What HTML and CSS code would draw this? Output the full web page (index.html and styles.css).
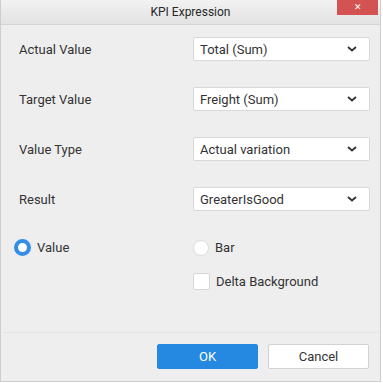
FILE: index.html
```html
<!DOCTYPE html>
<html lang="en">

<head>
    <meta charset="UTF-8">
    <title>KPI Expression</title>
    <link rel="stylesheet" href="styles.css">
</head>

<body>
    <div class="dialog">
        <div class="titlebar">
            <span>KPI Expression</span>
            <div class="close">&#x2715;</div>
        </div>

        <div class="content">
            <div class="field">
                <label>Actual Value</label>
                <div class="dropdown"><span>Total (Sum)</span>
                    <svg width="10" height="6" viewBox="0 0 10 6"><path d="M1 1l4 3.5L9 1" fill="none" stroke="#333" stroke-width="1.8"/></svg>
                </div>
            </div>
            <div class="field">
                <label>Target Value</label>
                <div class="dropdown"><span>Freight (Sum)</span>
                    <svg width="10" height="6" viewBox="0 0 10 6"><path d="M1 1l4 3.5L9 1" fill="none" stroke="#333" stroke-width="1.8"/></svg>
                </div>
            </div>
            <div class="field">
                <label>Value Type</label>
                <div class="dropdown"><span>Actual variation</span>
                    <svg width="10" height="6" viewBox="0 0 10 6"><path d="M1 1l4 3.5L9 1" fill="none" stroke="#333" stroke-width="1.8"/></svg>
                </div>
            </div>
            <div class="field">
                <label>Result</label>
                <div class="dropdown"><span>GreaterIsGood</span>
                    <svg width="10" height="6" viewBox="0 0 10 6"><path d="M1 1l4 3.5L9 1" fill="none" stroke="#333" stroke-width="1.8"/></svg>
                </div>
            </div>

            <div class="options">
                <div class="choice"><span class="radio checked"></span>Value</div>
                <div class="choice"><span class="radio"></span>Bar</div>
                <div class="choice second"><span class="check"></span>Delta Background</div>
            </div>
        </div>

        <div class="footer">
            <button class="btn primary">OK</button>
            <button class="btn">Cancel</button>
        </div>
    </div>
</body>

</html>
```

FILE: styles.css
```css
body {
    margin: 0px;
    background-color: white;
    font-family: Roboto, "Liberation Sans", sans-serif;
    color: rgb(51, 51, 51);
}

.dialog {
    width: 381px;
    height: 382px;
    box-sizing: border-box;
    border: 1px solid rgb(205, 205, 205);
    border-top: none;
    background-color: rgb(238, 238, 238);
    display: flex;
    flex-direction: column;
}

.titlebar {
    position: relative;
    height: 25px;
    box-sizing: border-box;
    border-bottom: 1px solid rgb(212, 212, 212);
    background: linear-gradient(rgb(242, 242, 242), rgb(226, 226, 226));
    display: flex;
    align-items: center;
    justify-content: center;
    font-size: 12px;
    color: rgb(40, 40, 40);
}

.close {
    position: absolute;
    top: 0px;
    right: 2px;
    width: 41px;
    height: 15px;
    background-color: rgb(211, 82, 82);
    color: white;
    font-size: 9px;
    line-height: 15px;
    text-align: center;
}

.content {
    flex: 1;
    padding: 12px 11px 0px 18px;
    display: flex;
    flex-direction: column;
    gap: 26px;
}

.field {
    display: grid;
    grid-template-columns: 174px 177px;
    align-items: center;
    font-size: 13px;
}

.dropdown {
    height: 24px;
    box-sizing: border-box;
    border: 1px solid rgb(216, 216, 216);
    border-radius: 2px;
    background-color: white;
    padding: 0px 12px 0px 6px;
    display: flex;
    align-items: center;
    justify-content: space-between;
}

.options {
    display: grid;
    grid-template-columns: 179px 177px;
    row-gap: 17px;
    margin: 2px 0px 0px -5px;
    font-size: 13px;
}

.choice {
    display: flex;
    align-items: center;
    gap: 6px;
    height: 17px;
}

.second {
    grid-column: 2;
}

.radio {
    width: 16px;
    height: 16px;
    box-sizing: border-box;
    border-radius: 50%;
    border: 1px solid rgb(220, 220, 220);
    background-color: white;
}

.radio.checked {
    width: 17px;
    height: 17px;
    border: 4px solid rgb(52, 142, 232);
}

.check {
    width: 17px;
    height: 17px;
    box-sizing: border-box;
    border: 1px solid rgb(215, 215, 215);
    border-radius: 2px;
    background-color: white;
}

.footer {
    margin: 0px 2px;
    border-top: 1px solid rgb(226, 226, 226);
    padding: 11px 9px 12px 0px;
    display: flex;
    justify-content: flex-end;
    gap: 10px;
}

.btn {
    width: 101px;
    height: 25px;
    border: 1px solid rgb(210, 210, 210);
    border-radius: 2px;
    background-color: white;
    font-family: Roboto, "Liberation Sans", sans-serif;
    font-size: 13px;
    color: rgb(51, 51, 51);
}

.btn.primary {
    border-color: rgb(37, 137, 226);
    background-color: rgb(37, 137, 226);
    color: white;
}
```
